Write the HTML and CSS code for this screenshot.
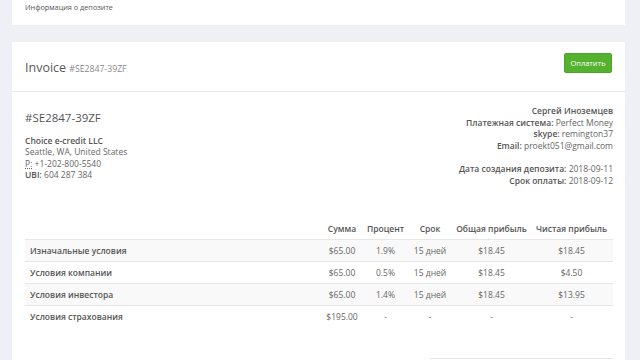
FILE: index.html
```html
<!DOCTYPE html>
<html lang="ru">
<head>
<meta charset="utf-8">
<title>Invoice</title>
<link rel="stylesheet" href="styles.css">
</head>
<body>
<div class="page">
  <div class="card card-top">
    <div class="crumb">Информация о депозите</div>
  </div>
  <div class="card card-invoice">
    <div class="inv-head">
      <div class="inv-title">Invoice <small>#SE2847-39ZF</small></div>
      <button class="btn-pay">Оплатить</button>
    </div>
    <div class="inv-body">
      <div class="inv-info">
        <div class="from">
          <h3 class="inv-num">#SE2847-39ZF</h3>
          <address class="addr">
            <strong>Choice e-credit LLC</strong><br>
            Seattle, WA, United States<br>
            <abbr title="Phone">P:</abbr> +1-202-800-5540<br>
            <strong>UBI:</strong> 604 287 384
          </address>
        </div>
        <div class="to">
          <p class="to-block">
            <strong>Сергей Иноземцев</strong><br>
            <strong>Платежная система:</strong> Perfect Money<br>
            <strong>skype:</strong> remington37<br>
            <strong>Email:</strong> proekt051@gmail.com
          </p>
          <p class="to-block">
            <strong>Дата создания депозита:</strong> 2018-09-11<br>
            <strong>Срок оплаты:</strong> 2018-09-12
          </p>
        </div>
      </div>
      <table class="inv-table">
        <colgroup>
          <col>
          <col class="c-sum">
          <col class="c-pct">
          <col class="c-term">
          <col class="c-total">
          <col class="c-net">
        </colgroup>
        <thead>
          <tr><th></th><th>Сумма</th><th>Процент</th><th>Срок</th><th>Общая прибыль</th><th>Чистая прибыль</th></tr>
        </thead>
        <tbody>
          <tr class="odd"><td class="lbl">Изначальные условия</td><td>$65.00</td><td>1.9%</td><td>15 дней</td><td>$18.45</td><td>$18.45</td></tr>
          <tr><td class="lbl">Условия компании</td><td>$65.00</td><td>0.5%</td><td>15 дней</td><td>$18.45</td><td>$4.50</td></tr>
          <tr class="odd"><td class="lbl">Условия инвестора</td><td>$65.00</td><td>1.4%</td><td>15 дней</td><td>$18.45</td><td>$13.95</td></tr>
          <tr><td class="lbl">Условия страхования</td><td>$195.00</td><td>-</td><td>-</td><td>-</td><td>-</td></tr>
        </tbody>
      </table>
      <div class="totals"></div>
    </div>
  </div>
</div>
</body>
</html>
```

FILE: styles.css
```css
* { box-sizing: border-box; }
html, body {
  margin: 0;
  padding: 0;
  background: #eef0f5;
  font-family: "Open Sans", "Noto Sans", sans-serif;
  color: #676a6c;
  font-size: 8.5px;
  overflow: hidden;
}
.page {
  padding: 0 15px 0 12px;
  display: flex;
  flex-direction: column;
  gap: 17px;
}
.card {
  background: #fff;
}
.card-top {
  height: 25px;
  padding: 2px 13px 0;
}
.crumb {
  font-size: 7.3px;
  line-height: 10px;
  color: #555;
}
.inv-head {
  height: 50px;
  padding: 0 13px;
  border-bottom: 1px solid #e7eaec;
  display: flex;
  align-items: center;
  justify-content: space-between;
}
.inv-title {
  font-size: 12.5px;
  color: #5a5a5a;
  padding-top: 1px;
}
.inv-title small {
  font-size: 8.7px;
  color: #8a8a8a;
}
.btn-pay {
  background: #54b22e;
  border: 1px solid #4aa626;
  color: #fff;
  font-family: inherit;
  font-size: 7.5px;
  height: 20px;
  width: 48px;
  padding: 0;
  border-radius: 2px;
  margin-top: -8px;
}
.inv-body {
  padding: 13px 12px 0 13px;
}
.inv-info {
  display: flex;
  justify-content: space-between;
  align-items: flex-start;
}
.inv-num {
  margin: 5px 0 0;
  font-size: 11.5px;
  line-height: 16px;
  font-weight: 400;
  color: #555;
}
.addr {
  margin: 9px 0 0;
  font-style: normal;
  line-height: 11.4px;
  color: #666;
}
strong { font-weight: 600; }
.addr strong { color: #555; }
.addr abbr { text-decoration: underline dotted; }
.to {
  text-align: right;
}
.to-block {
  margin: 0 0 12px;
  line-height: 11.5px;
  color: #666;
}
.to-block strong { color: #555; }
.inv-table {
  margin-top: 21px;
  width: 100%;
  border-collapse: collapse;
  table-layout: fixed;
}
.c-sum { width: 44px; }
.c-pct { width: 43px; }
.c-term { width: 46px; }
.c-total { width: 77px; }
.c-net { width: 83px; }
.inv-table th {
  height: 20px;
  font-weight: 600;
  color: #555;
  text-align: center;
  padding: 0;
  white-space: nowrap;
  vertical-align: middle;
  font-size: 8.5px;
}
.inv-table td {
  height: 22px;
  padding: 0;
  text-align: center;
  border-top: 1px solid #e7e7e7;
  color: #666;
  vertical-align: middle;
  white-space: nowrap;
}
.inv-table td.lbl {
  text-align: left;
  padding-left: 5px;
  font-weight: 600;
  color: #555;
}
.inv-table tr.odd td { background: #f9f9f9; }
.totals {
  margin: 31px 0 0 auto;
  width: 183px;
  height: 10px;
  border-top: 1px solid #e7e7e7;
}
```
